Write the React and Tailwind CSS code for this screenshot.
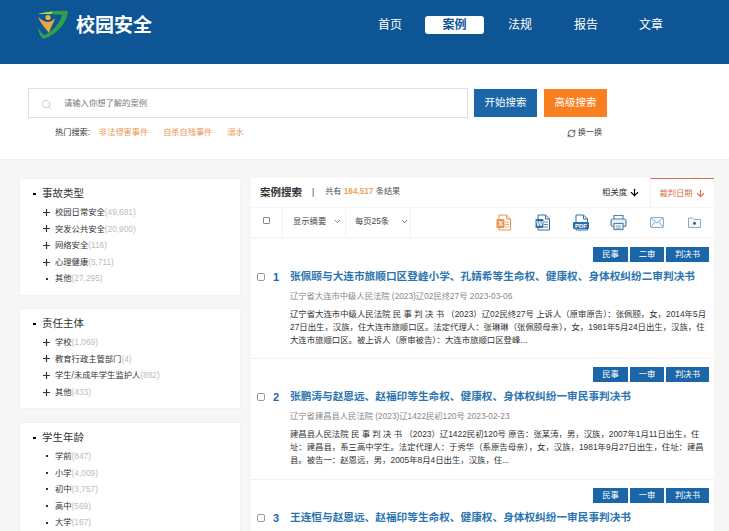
import React from 'react';
import { ChevronDown, ArrowDown, RefreshCw, Search } from 'lucide-react';

const font = 'font-["Liberation_Sans","Noto_Sans_CJK_SC",sans-serif]';

const navItems = [
    { label: '首页', cls: 'w-[24px]' },
    { label: '案例', cls: 'w-[59px] ml-[23px]', active: true },
    { label: '法规', cls: 'w-[24px] ml-[24px]' },
    { label: '报告', cls: 'w-[24px] ml-[42px]' },
    { label: '文章', cls: 'w-[24px] ml-[41px]' },
];

const filterGroups = [
    {
        title: '事故类型',
        cls: 'h-[118px] mb-[12px]',
        items: [
            ['+', '校园日常安全', '(49,681)'],
            ['+', '突发公共安全', '(20,900)'],
            ['+', '网络安全', '(116)'],
            ['+', '心理健康', '(5,711)'],
            ['.', '其他', '(27,295)'],
        ],
    },
    {
        title: '责任主体',
        cls: 'h-[101px] mb-[13px]',
        items: [
            ['+', '学校', '(1,069)'],
            ['+', '教育行政主管部门', '(4)'],
            ['+', '学生/未成年学生监护人', '(882)'],
            ['+', '其他', '(433)'],
        ],
    },
    {
        title: '学生年龄',
        cls: 'h-[130px]',
        items: [
            ['.', '学前', '(847)'],
            ['.', '小学', '(4,009)'],
            ['.', '初中', '(3,757)'],
            ['.', '高中', '(569)'],
            ['.', '大学', '(167)'],
        ],
    },
];

const results = [
    {
        no: 1,
        tags: ['民事', '二审', '判决书'],
        title: '张佩颐与大连市旅顺口区登峰小学、孔婧希等生命权、健康权、身体权纠纷二审判决书',
        meta: '辽宁省大连市中级人民法院 (2023)辽02民终27号 2023-03-06',
        lines: [
            '辽宁省大连市中级人民法院 民 事 判 决 书 （2023）辽02民终27号 上诉人（原审原告）：张佩颐，女，2014年5月',
            '27日出生，汉族，住大连市旅顺口区。法定代理人：张琳琳（张佩颐母亲），女，1981年5月24日出生，汉族，住',
            '大连市旅顺口区。被上诉人（原审被告）：大连市旅顺口区登峰...',
        ],
        h: 'h-[120px]',
    },
    {
        no: 2,
        tags: ['民事', '一审', '判决书'],
        title: '张鹏涛与赵恩远、赵福印等生命权、健康权、身体权纠纷一审民事判决书',
        meta: '辽宁省建昌县人民法院 (2023)辽1422民初120号 2023-02-23',
        lines: [
            '建昌县人民法院 民 事 判 决 书 （2023）辽1422民初120号 原告：张某涛，男，汉族，2007年1月11日出生，住',
            '址：建昌县，系三高中学生。法定代理人：于秀华（系原告母亲），女，汉族，1981年9月27日出生，住址：建昌',
            '县。被告一：赵恩远，男，2005年8月4日出生，汉族，住...',
        ],
        h: 'h-[121px]',
    },
    {
        no: 3,
        tags: ['民事', '一审', '判决书'],
        title: '王连恒与赵恩远、赵福印等生命权、健康权、身体权纠纷一审民事判决书',
        meta: '',
        lines: [],
        h: 'h-[60px]',
    },
];

const tagWidths = ['w-[35px]', 'w-[34px]', 'w-[43px]'];

const Logo = () => (
    <svg width="32" height="30" viewBox="0 0 32 30" className="shrink-0">
        <path d="M1 4 C10 1 22 0 31 1 C30 13 20 25 6 29 C3 26 1 22 1 17 C3 21 5 24 8 25 C16 21 23 13 25 5 C17 4 9 4 1 4 Z" fill="#2f9e4f" />
        <path d="M1 4 C6 2.5 11 2 16 1.5 L14 4 C9 4 5 4 1 4 Z" fill="#b9d44a" />
        <circle cx="11" cy="7.5" r="2.6" fill="#f2b233" />
        <path d="M1 7 C4 9 7 12 10.5 12 C13 12 15 11 18 8 C17 13 14 16 12 23 C9 19 4 14 1 7 Z" fill="#eda63a" />
    </svg>
);

const FileIcon = ({ color, label, wide }) => (
    <svg width="16" height="17" viewBox="0 0 16 17" fill="none" className="shrink-0">
        <path d="M3 1 H10.5 L14.5 5 V16 H3 Z" stroke={color} strokeWidth="1" fill="#fff" />
        <path d="M10.5 1 V5 H14.5" stroke={color} strokeWidth="1" />
        {!wide && <path d="M9 8 H13 M9 10.5 H13 M9 13 H13" stroke={color} strokeWidth="0.8" />}
        <rect x={wide ? 0 : 0.5} y={wide ? 8 : 5} width={wide ? 16 : 8} height={wide ? 7 : 9} rx="1" fill={color} />
        <text x={wide ? 8 : 4.5} y={wide ? 13.7 : 12} textAnchor="middle" fontSize={wide ? 6 : 7} fontWeight="700" fill="#fff" fontFamily="Liberation Sans">{label}</text>
    </svg>
);

const PrinterIcon = () => (
    <svg width="17" height="17" viewBox="0 0 17 17" fill="none" stroke="#4f86ad" strokeWidth="1.2" className="shrink-0">
        <path d="M4 5 V1.5 H13 V5" />
        <rect x="1" y="5" width="15" height="7.5" rx="2" fill="#eaf1f6" />
        <rect x="4" y="9.5" width="9" height="6" fill="#fff" />
        <path d="M6 12 H11 M6 14 H11" strokeWidth="0.8" />
    </svg>
);

const MailIcon = () => (
    <svg width="14" height="11" viewBox="0 0 14 11" fill="none" stroke="#7fa3bf" strokeWidth="0.9" className="shrink-0">
        <rect x="0.5" y="0.5" width="13" height="10" rx="1" fill="#f7fafc" />
        <path d="M1 1 L7 6 L13 1 M1 10 L5 4.8 M13 10 L9 4.8" />
    </svg>
);

const FolderIcon = () => (
    <svg width="13" height="11" viewBox="0 0 13 11" fill="none" className="shrink-0">
        <path d="M0.5 1 H4.5 L6 2.5 H12.5 V10.5 H0.5 Z" stroke="#7fa3bf" strokeWidth="0.9" fill="#f4f8fb" />
        <circle cx="6.5" cy="6.3" r="1.5" fill="#2f5f8f" />
    </svg>
);

const FilterCard = ({ title, items, cls }) => (
    <div className={`bg-white border border-[#f1f1f1] pl-[13px] pt-[5px] overflow-hidden ${cls}`}>
        <div className="flex items-center h-[20px] text-[10.5px] text-[#333]">
            <span className="w-[3px] h-[2px] bg-black mr-[6px]"></span>
            <span>{title}</span>
        </div>
        <ul>
            {items.map(([mark, name, count]) => (
                <li key={name} className="flex items-center h-[16.6px] text-[8.3px] text-[#333] pl-[9px] whitespace-nowrap">
                    <span className="w-[8px] mr-[5px] flex justify-center">
                        {mark === '+' ? (
                            <svg width="7" height="7" viewBox="0 0 7 7" stroke="#333" strokeWidth="1.2">
                                <path d="M0 3.5 H7 M3.5 0 V7" />
                            </svg>
                        ) : (
                            <span className="w-[2px] h-[2px] bg-[#333] ml-[2px]"></span>
                        )}
                    </span>
                    <span>{name}</span>
                    <span className="text-[#bbb]">{count}</span>
                </li>
            ))}
        </ul>
    </div>
);

const ResultItem = ({ no, tags, title, meta, lines, h }) => (
    <div className={`bg-white border-b border-[#f1f1f1] ${h}`}>
        <div className="flex justify-end gap-[2px] pr-[5px] pt-[8px]">
            {tags.map((tag, i) => (
                <span key={i} className={`${tagWidths[i]} h-[15px] bg-[#1a66a8] text-white text-[8.3px] leading-[15px] text-center`}>{tag}</span>
            ))}
        </div>
        <div className="flex items-center h-[20px] mt-[5px]">
            <span className="ml-[6px] w-[8px] h-[8px] border border-[#999] rounded-[2px] bg-white shrink-0"></span>
            <span className="w-[22px] text-center text-[#1a66a8] text-[11px] font-bold shrink-0">{no}</span>
            <span className="ml-[3px] text-[#2b75b0] text-[10.66px] font-bold whitespace-nowrap">{title}</span>
        </div>
        {meta && <div className="ml-[39px] mt-[2px] text-[8.3px] leading-[14px] text-[#888] whitespace-nowrap">{meta}</div>}
        <div className="ml-[39px] mt-[5px] text-[8.38px] leading-[13px] text-[#333]">
            {lines.map((line, i) => (
                <div key={i} className="whitespace-nowrap">{line}</div>
            ))}
        </div>
    </div>
);

const App = () => {
    return (
        <div className={`${font} w-[729px] h-[531px] overflow-hidden bg-[#f6f6f6]`}>
            {/* Top bar */}
            <header className="h-[64px] bg-[#0d5594] flex items-start">
                <div className="flex items-center ml-[37px] mt-[10px]">
                    <Logo />
                    <span className="ml-[7px] text-[19px] font-bold text-white leading-none">校园安全</span>
                </div>
                <nav className="flex items-center ml-[226px] mt-[16px]">
                    {navItems.map((item) => (
                        <span
                            key={item.label}
                            className={`${item.cls} h-[18px] text-[12px] leading-[18px] text-center whitespace-nowrap ${
                                item.active ? 'rounded-[3px] bg-white text-[#0d5594] font-bold' : 'text-white'
                            }`}
                        >
                            {item.label}
                        </span>
                    ))}
                </nav>
            </header>

            {/* Search */}
            <section className="h-[95px] bg-white pl-[28px] pt-[24px]">
                <div className="flex items-center">
                    <div className="w-[440px] h-[30px] border border-[#dfdfdf] bg-white flex items-center">
                        <Search size={11} strokeWidth={1.2} className="ml-[12px] mt-[2px] text-[#aaa]" />
                        <span className="ml-[12px] text-[8.3px] text-[#777]">请输入你想了解的案例</span>
                    </div>
                    <button className="w-[63px] h-[28px] ml-[6px] bg-[#1a66a8] text-white text-[10.5px]">开始搜索</button>
                    <button className="w-[63px] h-[28px] ml-[7px] bg-[#f98021] text-white text-[10.5px]">高级搜索</button>
                </div>
                <div className="flex items-center h-[14px] mt-[8px] text-[8.2px] whitespace-nowrap">
                    <span className="w-[36px] ml-[27px] text-[#333]">热门搜索:</span>
                    <span className="ml-[8px] text-[#ea9550]">非法侵害事件</span>
                    <span className="ml-[15px] text-[#ea9550]">自杀自残事件</span>
                    <span className="ml-[15px] text-[#ea9550]">溺水</span>
                    <RefreshCw size={9} strokeWidth={2} className="ml-[323px] text-[#333]" />
                    <span className="ml-[2px] text-[#444]">换一换</span>
                </div>
            </section>

            {/* Body */}
            <main className="flex items-start pl-[19px] pt-[18px] bg-[#f6f6f6] border-t border-[#f0f0f0]">
                <aside className="w-[222px] shrink-0 mr-[10px]">
                    {filterGroups.map((g) => (
                        <FilterCard key={g.title} {...g} />
                    ))}
                </aside>

                <div className="w-[463px] shrink-0">
                    <div className="h-[29px] bg-white flex items-center">
                        <span className="ml-[9px] text-[10.5px] font-bold text-[#333]">案例搜索</span>
                        <span className="ml-[10px] text-[8.3px] text-[#333]">|</span>
                        <span className="ml-[11px] text-[8.2px] text-[#555] whitespace-nowrap">共有 <span className="text-[#e9a45c] font-bold">164,517</span> 条结果</span>
                        <span className="ml-auto text-[8.3px] text-[#333]">相关度</span>
                        <ArrowDown size={11} strokeWidth={2.4} className="ml-[2px] mr-[10px] text-black" />
                        <div className="w-[64px] h-[29px] border-t border-l border-t-[#d9714a] border-l-[#f0f0f0] flex items-center justify-center text-[#d9714a] text-[8.3px]">
                            裁判日期
                            <ArrowDown size={11} strokeWidth={2.4} className="ml-[2px]" />
                        </div>
                    </div>
                    <div className="h-[29px] mt-[1px] bg-white flex items-center">
                        <span className="w-[32px] h-full pb-[5px] border-r border-[#f2f2f2] flex items-center justify-center">
                            <span className="w-[7px] h-[7px] border border-[#888] rounded-[1px]"></span>
                        </span>
                        <span className="w-[63px] h-full pb-[2px] border-r border-[#f2f2f2] flex items-center pl-[10px] text-[8.3px] text-[#444]">
                            显示摘要
                            <ChevronDown size={9} className="ml-[7px]" />
                        </span>
                        <span className="w-[65px] h-full pb-[2px] border-r border-[#f2f2f2] flex items-center pl-[9px] text-[8.3px] text-[#444] whitespace-nowrap">
                            每页25条
                            <ChevronDown size={9} className="ml-[11px]" />
                        </span>
                        <div className="flex items-center ml-[85px]">
                            <FileIcon color="#e8954f" label="X" />
                            <span className="ml-[23px]"><FileIcon color="#2f6ea5" label="W" /></span>
                            <span className="ml-[22px]"><FileIcon color="#2f6ea5" label="PDF" wide /></span>
                            <span className="ml-[21px]"><PrinterIcon /></span>
                            <span className="ml-[23px]"><MailIcon /></span>
                            <span className="ml-[24px]"><FolderIcon /></span>
                        </div>
                    </div>
                    <div className="mt-[2px]">
                        {results.map((r) => (
                            <ResultItem key={r.no} {...r} />
                        ))}
                    </div>
                </div>
            </main>
        </div>
    );
};

export default App;
